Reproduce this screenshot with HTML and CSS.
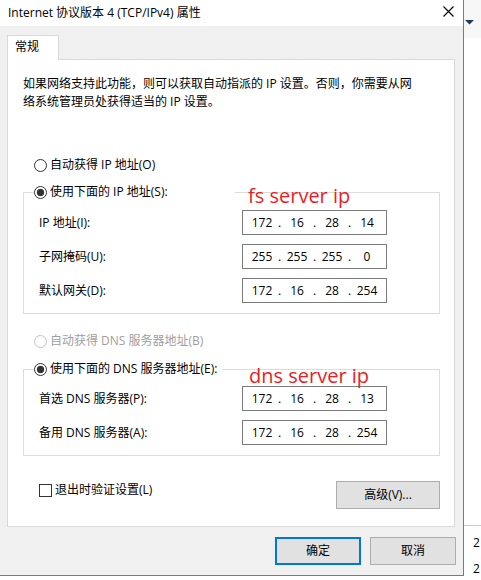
FILE: index.html
```html
<!DOCTYPE html>
<html lang="zh-CN">
<head>
<meta charset="utf-8">
<title>Internet 协议版本 4 (TCP/IPv4) 属性</title>
<link rel="stylesheet" href="styles.css">
</head>
<body>
<div class="screen">
  <div class="dialog">
    <div class="titlebar">
      <span class="title">Internet 协议版本 4 (TCP/IPv4) 属性</span>
      <svg class="close" width="11" height="11" viewBox="0 0 11 11"><path d="M0.5 0.5L10.5 10.5M10.5 0.5L0.5 10.5" stroke="#000" stroke-width="1.1" fill="none"/></svg>
    </div>
    <div class="tabs"><div class="tab">常规</div></div>
    <div class="panel">
      <p class="intro">如果网络支持此功能，则可以获取自动指派的 IP 设置。否则，你需要从网<br>络系统管理员处获得适当的 IP 设置。</p>

      <div class="option opt-first"><span class="radio"></span><span>自动获得 IP 地址(O)</span></div>

      <fieldset class="group group-ip">
        <legend class="legend legend-ip"><span class="radio checked"></span><span>使用下面的 IP 地址(S):</span></legend>
        <div class="rows rows-ip">
          <span class="label">IP 地址(I):</span>
          <div class="ip"><span class="seg">172</span><span class="dot">.</span><span class="seg">16</span><span class="dot">.</span><span class="seg">28</span><span class="dot">.</span><span class="seg">14</span></div>
          <span class="label">子网掩码(U):</span>
          <div class="ip"><span class="seg">255</span><span class="dot">.</span><span class="seg">255</span><span class="dot">.</span><span class="seg">255</span><span class="dot">.</span><span class="seg">0</span></div>
          <span class="label">默认网关(D):</span>
          <div class="ip"><span class="seg">172</span><span class="dot">.</span><span class="seg">16</span><span class="dot">.</span><span class="seg">28</span><span class="dot">.</span><span class="seg">254</span></div>
        </div>
      </fieldset>

      <div class="option opt-dns disabled"><span class="radio"></span><span>自动获得 DNS 服务器地址(B)</span></div>

      <fieldset class="group group-dns">
        <legend class="legend legend-dns"><span class="radio checked"></span><span>使用下面的 DNS 服务器地址(E):</span></legend>
        <div class="rows rows-dns">
          <span class="label">首选 DNS 服务器(P):</span>
          <div class="ip"><span class="seg">172</span><span class="dot">.</span><span class="seg">16</span><span class="dot">.</span><span class="seg">28</span><span class="dot">.</span><span class="seg">13</span></div>
          <span class="label">备用 DNS 服务器(A):</span>
          <div class="ip"><span class="seg">172</span><span class="dot">.</span><span class="seg">16</span><span class="dot">.</span><span class="seg">28</span><span class="dot">.</span><span class="seg">254</span></div>
        </div>
      </fieldset>

      <div class="checkrow">
        <div class="check"><span class="box"></span><span>退出时验证设置(L)</span></div>
        <button class="btn btn-adv">高级(V)...</button>
      </div>

      <span class="note note-fs">fs server ip</span>
      <span class="note note-dns">dns server ip</span>
    </div>
    <div class="footer">
      <button class="btn btn-ok">确定</button>
      <button class="btn btn-cancel">取消</button>
    </div>
  </div>
  <div class="side">
    <div class="side-top"><svg class="arrow" width="9" height="5" viewBox="0 0 9 5"><path d="M0 0H9L4.5 4.5Z" fill="#1f3c62"/></svg></div>
    <div class="side-mid"></div>
    <div class="side-list">
      <div class="side-item">2</div>
      <div class="side-item">2</div>
    </div>
  </div>
</div>
</body>
</html>
```

FILE: styles.css
```css
* { box-sizing: border-box; }

html, body {
  margin: 0;
  padding: 0;
  background: #ffffff;
}

body {
  font-family: "Open Sans", "Noto Sans CJK SC", sans-serif;
  font-size: 12px;
  line-height: 18px;
  color: #000;
}

.screen {
  display: flex;
  width: 481px;
  height: 580px;
  overflow: hidden;
}

.dialog {
  width: 464px;
  height: 576px;
  flex: none;
  display: flex;
  flex-direction: column;
  background: #f0f0f0;
  border-right: 1px solid #7a7a7a;
  border-bottom: 1px solid #7a7a7a;
}

.titlebar {
  height: 26px;
  flex: none;
  display: flex;
  align-items: center;
  background: #ffffff;
  padding-left: 8px;
}

.title {
  line-height: 26px;
}

.close {
  margin-left: auto;
  margin-right: 9px;
  margin-top: -3px;
  display: block;
}

.tabs {
  padding: 9px 0 0 7px;
  display: flex;
  flex: none;
}

.tab {
  position: relative;
  z-index: 1;
  width: 52px;
  height: 25px;
  margin-bottom: -1px;
  background: #ffffff;
  border: 1px solid #d9d9d9;
  border-bottom: none;
  padding: 2px 0 0 7px;
}

.panel {
  position: relative;
  flex: none;
  width: 448px;
  height: 468px;
  margin: 0 8px 0 7px;
  background: #ffffff;
  border: 1px solid #d9d9d9;
}

.intro {
  margin: 15px 0 0 15px;
}

.option {
  display: flex;
  align-items: center;
  gap: 3px;
  height: 18px;
  margin-left: 26px;
}

.opt-first { margin-top: 45px; }
.opt-dns { margin-top: 18px; }

.disabled { color: #a0a0a0; }
.disabled .radio { border-color: #c2c2c2; }

.radio {
  width: 13px;
  height: 13px;
  flex: none;
  border: 1px solid #333333;
  border-radius: 50%;
  background: #ffffff;
}

.radio.checked {
  background: radial-gradient(circle, #333333 0, #333333 3.4px, #ffffff 4.1px);
}

.group {
  margin: 0 0 0 15px;
  padding: 0;
  width: 417px;
  border: 1px solid #dcdcdc;
  min-width: 0;
}

.group-ip { margin-top: 9px; }
.group-dns { margin-top: 10px; }

.legend {
  display: flex;
  align-items: center;
  gap: 3px;
  height: 18px;
  padding: 0;
  margin-left: 10px;
}

.legend-ip { width: 201px; }
.legend-dns { width: 189px; }

.rows {
  display: grid;
  grid-template-columns: 203px 145px;
  row-gap: 9px;
  align-items: center;
  padding: 9px 0 10px 15px;
}

.rows-dns { padding-top: 8px; }

.ip {
  display: flex;
  align-items: center;
  width: 145px;
  height: 25px;
  border: 1px solid #7a7a7a;
  background: #ffffff;
  padding-left: 3px;
}

.seg {
  width: 32px;
  text-align: center;
}

.dot {
  width: 3px;
  text-align: center;
}

.checkrow {
  display: flex;
  align-items: flex-start;
  margin: 25px 14px 0 31px;
}

.check {
  display: flex;
  align-items: center;
  gap: 3px;
  height: 18px;
}

.box {
  width: 13px;
  height: 13px;
  border: 1px solid #333333;
  background: #ffffff;
}

.btn {
  font: inherit;
  color: #000;
  background: #e1e1e1;
  border: 1px solid #adadad;
  padding: 0;
  margin: 0;
  height: 28px;
}

.btn-adv {
  margin-left: auto;
  width: 104px;
}

.note {
  position: absolute;
  font-family: "Open Sans", sans-serif;
  font-size: 20px;
  line-height: 20px;
  color: #ee1c24;
  white-space: nowrap;
}

.note-fs { top: 126px; left: 240px; }
.note-dns { top: 306px; left: 241px; }

.footer {
  display: flex;
  justify-content: flex-end;
  gap: 9px;
  padding: 10px 7px 0 0;
}

.btn-ok {
  width: 86px;
  border: 2px solid #0078d7;
}

.btn-cancel {
  width: 86px;
}

.side {
  flex: 1;
  display: flex;
  flex-direction: column;
  height: 580px;
  overflow: hidden;
}

.side-top {
  height: 38px;
  background: #f7f7f7;
  padding: 20px 0 0 1px;
}

.arrow { display: block; }

.side-mid { flex: 1; }

.side-list {
  height: 55px;
  border-top: 1px solid #cccccc;
  padding: 4px 0 0 9px;
  overflow: hidden;
}

.side-item {
  line-height: 26px;
  white-space: nowrap;
}
```
